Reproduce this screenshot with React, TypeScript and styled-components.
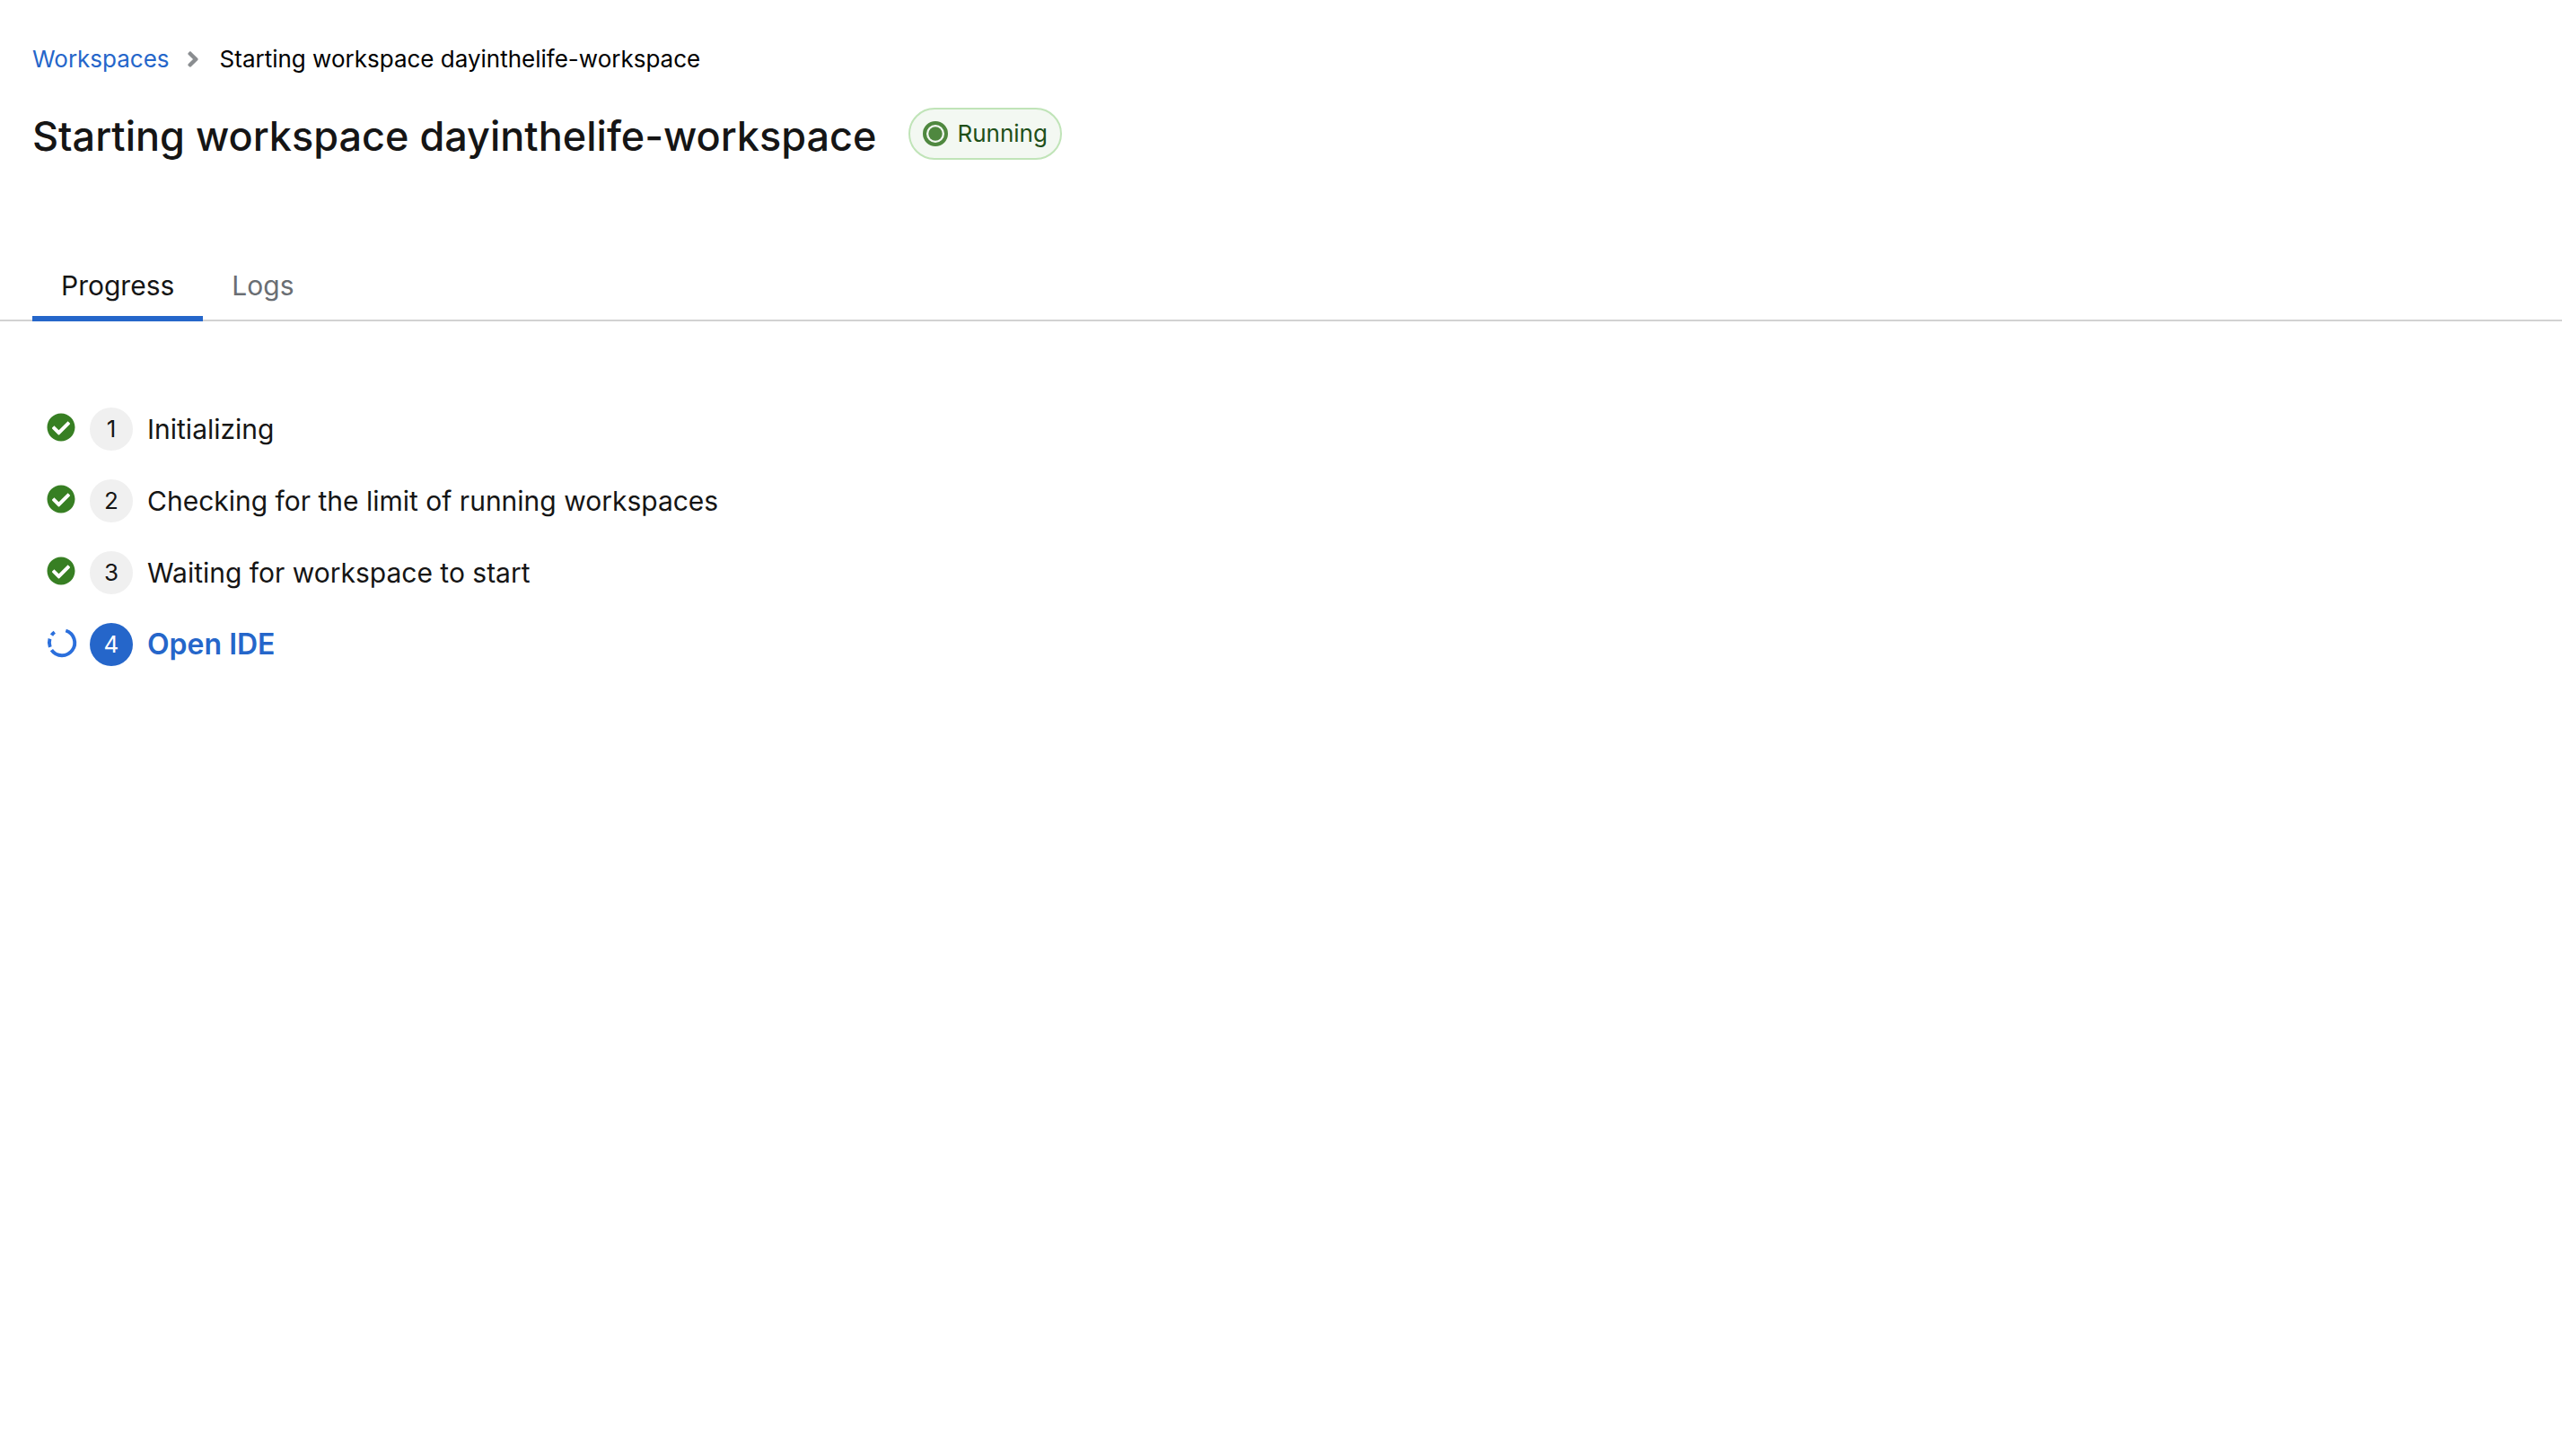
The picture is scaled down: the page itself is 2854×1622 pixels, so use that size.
import React from "react";
import styled, { createGlobalStyle } from "styled-components";
import { FaAngleRight, FaCheckCircle } from "react-icons/fa";

const GlobalStyle = createGlobalStyle`
  *, *::before, *::after { box-sizing: border-box; }
  body {
    margin: 0;
    background: #fff;
    color: #151515;
    font-family: Inter, "Liberation Sans", sans-serif;
    font-size: 30px;
    line-height: 48px;
  }
`;

const Page = styled.main`
  padding-top: 44px;
`;

const Header = styled.header`
  padding: 0 36px;
`;

const Trail = styled.ol`
  display: flex;
  align-items: center;
  margin: 0 0 32px;
  padding: 0;
  list-style: none;
  font-size: 26px;
  line-height: 44px;
  color: #000;
`;

const TrailItem = styled.li`
  display: flex;
  align-items: center;
`;

const TrailLink = styled.a`
  color: #2566ca;
  text-decoration: none;
`;

const Divider = styled(FaAngleRight)`
  width: 28px;
  height: 28px;
  margin: 0 16px 0 12px;
  color: #8a8d90;
`;

const TitleRow = styled.div`
  display: flex;
  align-items: flex-start;
  gap: 36px;
`;

const Title = styled.h1`
  margin: 0;
  font-size: 45px;
  font-weight: 500;
  line-height: 64px;
`;

const Badge = styled.span`
  display: flex;
  align-items: center;
  gap: 10px;
  height: 58px;
  padding: 0 14px;
  border: 2px solid #c0e4b8;
  border-radius: 29px;
  background: #f3f8f2;
  color: #1e4f18;
  font-size: 26px;
`;

const BadgeIcon = styled.svg`
  width: 28px;
  height: 28px;
`;

const TabList = styled.div`
  display: flex;
  margin-top: 94px;
  padding: 0 36px;
  box-shadow: inset 0 -2px #d2d2d2;
`;

const Tab = styled.button<{ $active?: boolean }>`
  padding: 16px 32px;
  border: 0;
  background: none;
  color: ${(p) => (p.$active ? "#151515" : "#6a6e73")};
  font: inherit;
  box-shadow: ${(p) => (p.$active ? "inset 0 -6px #2566ca" : "none")};
  cursor: pointer;
`;

const Steps = styled.ol`
  display: flex;
  flex-direction: column;
  gap: 32px;
  margin: 0;
  padding: 96px 52px;
  list-style: none;
`;

const Step = styled.li<{ $active?: boolean }>`
  display: flex;
  align-items: center;
  gap: 16px;
  color: ${(p) => (p.$active ? "#2566ca" : "#151515")};
`;

const StepStatus = styled.span`
  display: flex;
  padding-bottom: 4px;

  svg {
    width: 32px;
    height: 32px;
    overflow: visible;
  }
`;

const DoneIcon = styled(FaCheckCircle)`
  color: #377f23;
`;

const StepNumber = styled.span<{ $active?: boolean }>`
  width: 48px;
  height: 48px;
  border-radius: 50%;
  background: ${(p) => (p.$active ? "#2566ca" : "#f0f0f0")};
  color: ${(p) => (p.$active ? "#fff" : "#151515")};
  font-size: 26px;
  text-align: center;
`;

const StepName = styled.span<{ $active?: boolean }>`
  font-size: ${(p) => (p.$active ? "32px" : "30px")};
  font-weight: ${(p) => (p.$active ? 600 : 400)};
`;

const steps = [
  { name: "Initializing", done: true },
  { name: "Checking for the limit of running workspaces", done: true },
  { name: "Waiting for workspace to start", done: true },
  { name: "Open IDE", done: false },
];

function InProgressIcon() {
  return (
    <svg viewBox="-1 0 32 32" fill="none" stroke="#2b6fdc" strokeWidth="3.9" aria-hidden="true">
      <path d="M20.3 2.5A14.2 14.2 0 1 1 4.4 24.2" />
      <path d="M2.8 20.9A14.2 14.2 0 0 1 2.5 11.6" />
      <path d="M4.5 7.7A14.2 14.2 0 0 1 7.8 4.3" />
    </svg>
  );
}

export default function App() {
  return (
    <Page>
      <GlobalStyle />
      <Header>
        <nav aria-label="Breadcrumb">
          <Trail>
            <TrailItem>
              <TrailLink href="#workspaces">Workspaces</TrailLink>
            </TrailItem>
            <TrailItem aria-current="page">
              <Divider aria-hidden="true" />
              Starting workspace dayinthelife-workspace
            </TrailItem>
          </Trail>
        </nav>
        <TitleRow>
          <Title>Starting workspace dayinthelife-workspace</Title>
          <Badge>
            <BadgeIcon viewBox="0 0 28 28" aria-hidden="true">
              <circle cx="14" cy="14" r="12" fill="none" stroke="#4f883f" strokeWidth="4" />
              <circle cx="14" cy="14" r="7.7" fill="#4f883f" />
            </BadgeIcon>
            Running
          </Badge>
        </TitleRow>
      </Header>
      <TabList role="tablist">
        <Tab type="button" role="tab" aria-selected="true" $active>
          Progress
        </Tab>
        <Tab type="button" role="tab" aria-selected="false">
          Logs
        </Tab>
      </TabList>
      <Steps>
        {steps.map((step, index) => (
          <Step key={step.name} $active={!step.done}>
            <StepStatus>{step.done ? <DoneIcon aria-hidden="true" /> : <InProgressIcon />}</StepStatus>
            <StepNumber $active={!step.done}>{index + 1}</StepNumber>
            <StepName $active={!step.done}>{step.name}</StepName>
          </Step>
        ))}
      </Steps>
    </Page>
  );
}
